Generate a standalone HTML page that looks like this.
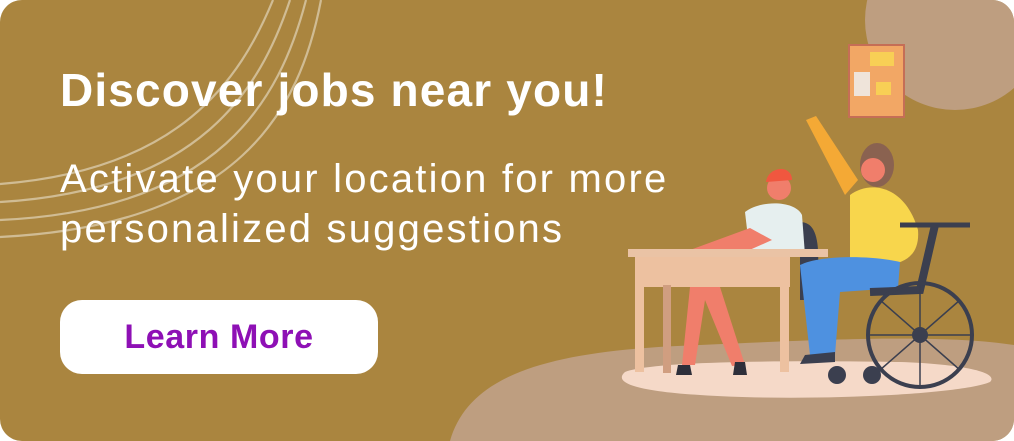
<!DOCTYPE html>
<html><head><style>
html,body{margin:0;padding:0;background:#fff;}
.c{position:relative;width:1014px;height:441px;background:#AA853F;border-radius:22px;overflow:hidden;font-family:"Liberation Sans",sans-serif;}
.t{position:absolute;left:60px;top:67px;color:#fff;font-size:46px;line-height:1;font-weight:bold;letter-spacing:1.15px;white-space:nowrap;}
.s{position:absolute;left:60px;top:154px;color:#fff;font-size:40px;line-height:50px;font-weight:normal;letter-spacing:2.2px;white-space:nowrap;}
.b{position:absolute;left:60px;top:300px;width:318px;height:74px;background:#fff;border-radius:22px;color:#8E10B5;font-size:34px;font-weight:bold;text-align:center;line-height:74px;letter-spacing:0.6px;}
svg{position:absolute;left:0;top:0;}
</style></head><body>
<div class="c">
<svg width="1014" height="441" viewBox="0 0 1014 441">
<g fill="none" stroke="#D7C6A3" stroke-width="2.2" opacity="0.85">
<path d="M273 0 C 240 80, 180 170, 0 184"/>
<path d="M290 0 C 260 90, 200 190, 0 202"/>
<path d="M306 0 C 280 100, 220 210, 0 220"/>
<path d="M321 0 C 300 110, 240 225, 0 237"/>
</g>
<circle cx="955" cy="20" r="90" fill="#BE9E80"/>
<path d="M450 441 C 470 370, 560 350, 700 345 C 850 338, 950 335, 1014 345 L1014 441 Z" fill="#BE9E80"/>
<path d="M625 372 C 650 362, 760 360, 900 362 C 960 364, 1000 372, 990 382 C 960 395, 800 402, 700 395 C 650 392, 610 385, 625 372 Z" fill="#F5D9C8"/>
<rect x="849" y="45" width="55" height="72" fill="#F2A765" stroke="#C56E56" stroke-width="2"/>
<rect x="870" y="52" width="24" height="14" fill="#F8CF55"/>
<rect x="854" y="72" width="16" height="24" fill="#EFE4DA"/>
<rect x="876" y="82" width="15" height="13" fill="#F8CF55"/>
<path d="M800 222 C 818 222, 822 245, 815 300 L 800 300 Z" fill="#3B3F4F"/>
<circle cx="779" cy="188" r="12" fill="#F07E6B"/>
<path d="M766 182 C 768 166, 792 164, 792 180 Z" fill="#F0573F"/>
<path d="M745 212 C 760 200, 795 200, 802 215 L 805 255 L 750 255 Z" fill="#E6EFEF"/>
<path d="M690 250 L 750 228 L 772 240 L 745 252 Z" fill="#F07E6B"/>
<rect x="628" y="249" width="200" height="8" fill="#EAC3A5"/>
<rect x="635" y="257" width="155" height="30" fill="#EDC1A0"/>
<rect x="635" y="257" width="9" height="115" fill="#EDC1A0"/>
<rect x="663" y="285" width="8" height="88" fill="#D09E80"/>
<rect x="780" y="257" width="9" height="115" fill="#EDC1A0"/>
<path d="M690 287 L 720 287 L 745 365 L 732 366 L 705 300 L 695 365 L 682 365 Z" fill="#F07E6B"/>
<path d="M806 120 L 816 116 L 858 180 L 845 195 Z" fill="#F4A935"/>
<ellipse cx="877" cy="165" rx="17" ry="22" fill="#8A6250"/>
<circle cx="873" cy="170" r="12" fill="#F07E6B"/>
<path d="M850 195 C 870 180, 905 185, 918 230 C 920 255, 905 262, 890 265 L 850 265 Z" fill="#F8D64C"/>
<path d="M800 265 C 820 255, 870 255, 900 262 L 898 288 L 840 292 L 835 355 L 810 355 Z" fill="#4E91E0"/>
<path d="M900 225 L 970 225" stroke="#3B3F4F" stroke-width="5"/>
<path d="M935 225 L 920 290 L 870 292" stroke="#3B3F4F" stroke-width="8" fill="none"/>
<circle cx="920" cy="335" r="52" fill="none" stroke="#3B3F4F" stroke-width="4"/>
<g stroke="#3B3F4F" stroke-width="1.5"><path d="M880 300 L960 370 M960 300 L880 370 M920 285 L920 385 M870 335 L970 335"/></g>
<circle cx="920" cy="335" r="8" fill="#3B3F4F"/>
<circle cx="837" cy="375" r="9" fill="#3B3F4F"/><circle cx="872" cy="375" r="9" fill="#3B3F4F"/>
<path d="M805 355 L 835 352 L 835 362 L 800 364 Z" fill="#3B3F4F"/>
<path d="M678 365 L 690 365 L 692 375 L 676 375 Z M735 362 L 745 362 L 747 375 L 733 375 Z" fill="#2E2F3A"/>
</svg>
<div class="t">Discover jobs near you!</div>
<div class="s">Activate your location for more<br>personalized suggestions</div>
<div class="b">Learn More</div>
</div>
</body></html>
